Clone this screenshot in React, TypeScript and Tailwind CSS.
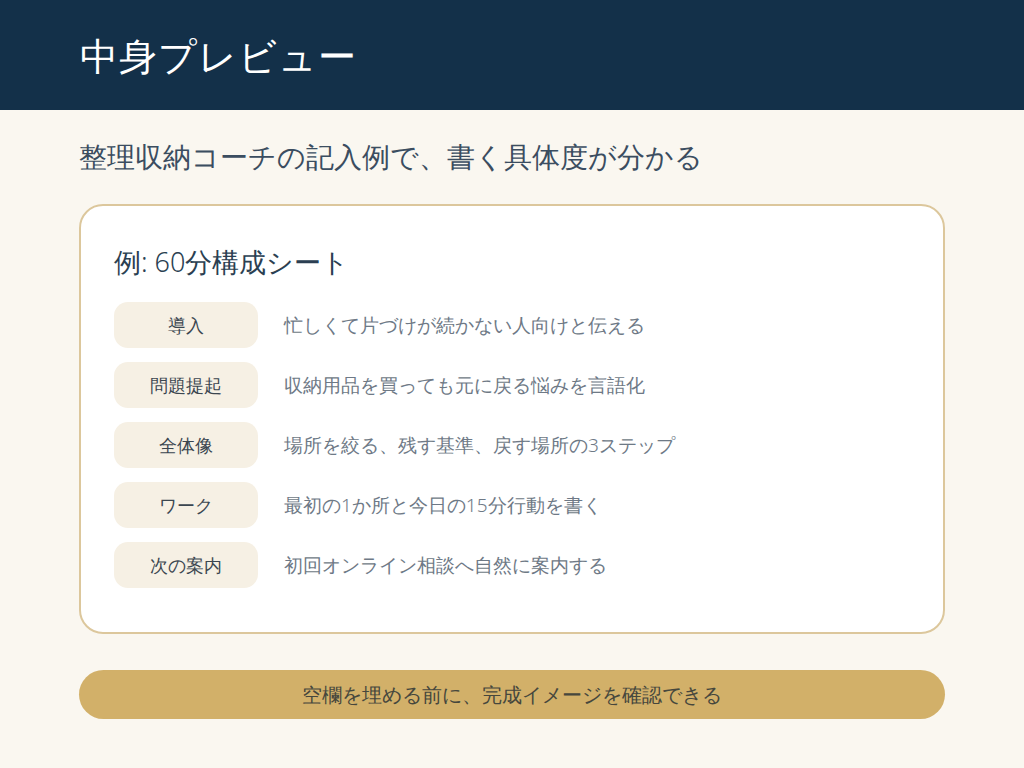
const rows = [
  ["導入", "忙しくて片づけが続かない人向けと伝える"],
  ["問題提起", "収納用品を買っても元に戻る悩みを言語化"],
  ["全体像", "場所を絞る、残す基準、戻す場所の3ステップ"],
  ["ワーク", "最初の1か所と今日の15分行動を書く"],
  ["次の案内", "初回オンライン相談へ自然に案内する"],
];

export default function App() {
  return (
    <div className="w-[1024px] h-[768px] bg-[#faf7f0] font-['Noto_Sans_CJK_JP',sans-serif] font-light overflow-hidden">
      <header className="h-[110px] bg-[#133049] flex items-center px-[80px]">
        <h1 className="text-[38px] text-white font-light tracking-wide">中身プレビュー</h1>
      </header>
      <div className="px-[79px]">
        <p className="mt-[26px] text-[28px] text-[#3b4d60] leading-[40px]">整理収納コーチの記入例で、書く具体度が分かる</p>
        <section className="mt-[28px] h-[430px] bg-white border-2 border-[#dcc79c] rounded-[24px] px-[33px] pt-[36px]">
          <h2 className="text-[27px] text-[#2b3f52] leading-[40px]">例: 60分構成シート</h2>
          <div className="mt-[20px] flex flex-col gap-[14px]">
            {rows.map(([k, v]) => (
              <div key={k} className="flex items-center gap-[26px]">
                <span className="w-[144px] h-[46px] rounded-[14px] bg-[#f6f0e4] flex items-center justify-center text-[18px] text-[#3b4650]">{k}</span>
                <span className="text-[19px] text-[#6e7986]">{v}</span>
              </div>
            ))}
          </div>
        </section>
        <div className="mt-[36px] h-[49px] rounded-full bg-[#d2b069] flex items-center justify-center text-[20px] text-[#46473d]">
          空欄を埋める前に、完成イメージを確認できる
        </div>
      </div>
    </div>
  );
}
